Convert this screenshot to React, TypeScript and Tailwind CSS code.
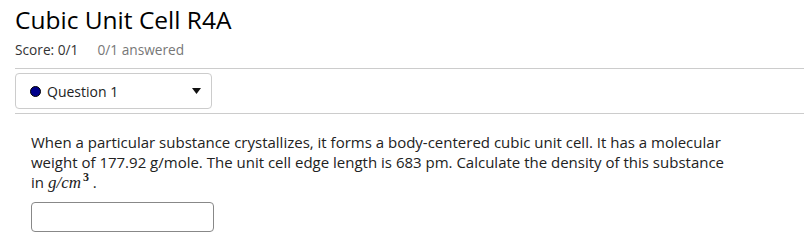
export default function App() {
  return (
    <div
      className="min-h-screen bg-white text-[#222]"
      style={{ fontFamily: '"Open Sans", sans-serif' }}
    >
      <div className="pl-[15px]">
        <h1 className="pt-[2px] text-[24.5px] leading-[36px] font-normal text-black">
          Cubic Unit Cell R4A
        </h1>
        <div className="mt-[2px] flex text-[13.7px] leading-[20px]">
          <span className="text-[#333]">Score: 0/1</span>
          <span className="ml-[19px] text-[#777]">0/1 answered</span>
        </div>
        <div className="mt-[8px] border-t border-[#ccc]" />
        <div className="py-[4px]">
          <div className="flex h-[36px] w-[197px] items-center rounded-[4px] border border-[#ccc] pl-[14px] pr-[10px]">
            <span className="h-[11px] w-[11px] rounded-full border border-black bg-[#00008b]" />
            <span className="ml-[6px] text-[14px] text-[#222]">Question 1</span>
            <svg className="ml-auto" width="9" height="6" viewBox="0 0 9 6">
              <path d="M0 0h9L4.5 6z" fill="#111" />
            </svg>
          </div>
        </div>
        <div className="border-t border-[#ccc]" />
      </div>
      <div className="pl-[31px] pr-4 pt-[18px]">
        <p className="text-[15px] leading-[20px] text-[#222]">
          When a particular substance crystallizes, it forms a body-centered cubic unit cell. It has a molecular
          <br />
          weight of 177.92 g/mole. The unit cell edge length is 683 pm. Calculate the density of this substance
          <br />
          in{" "}
          <span
            className="text-[17px] italic leading-[16px]"
            style={{ fontFamily: '"Liberation Serif", "DejaVu Serif", serif' }}
          >
            g/cm
            <sup className="-top-[7px] ml-[2px] not-italic text-[12px] font-bold leading-none">3</sup>
          </span>{" "}
          .
        </p>
        <input
          type="text"
          className="mt-[10px] h-[30px] w-[183px] rounded-[4px] border border-[#888] bg-white"
        />
      </div>
    </div>
  );
}
